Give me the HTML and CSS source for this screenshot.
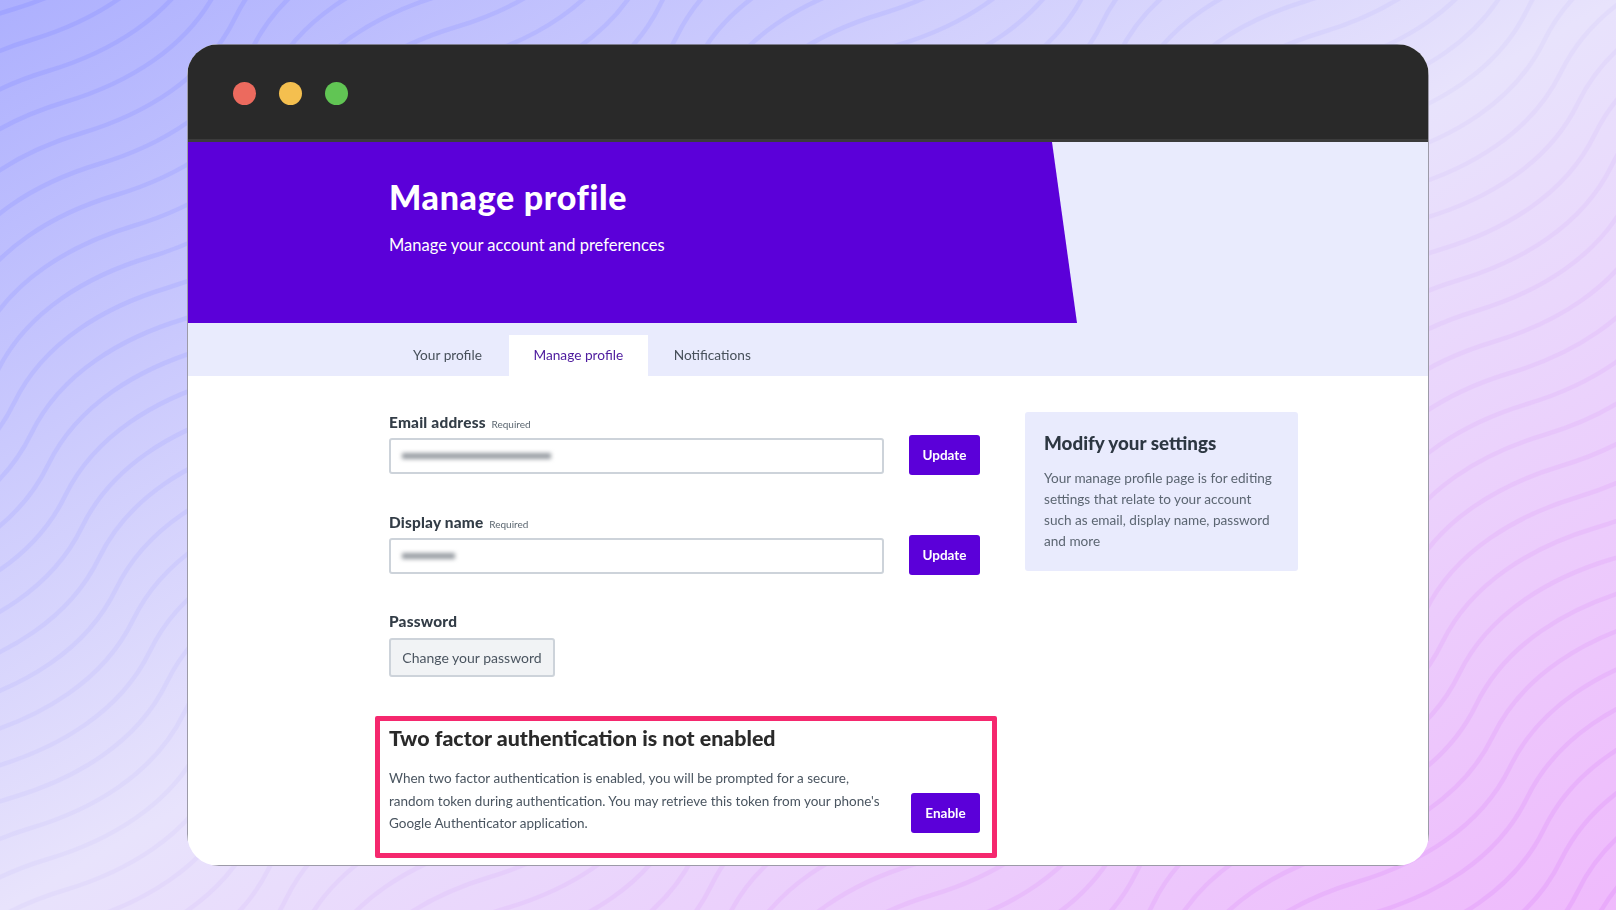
FILE: index.html
```html
<!DOCTYPE html>
<html lang="en">
<head>
    <meta charset="UTF-8">
    <title>Manage profile</title>
    <link rel="stylesheet" href="styles.css">
</head>
<body>
    <svg class="backdrop" width="1616" height="910" viewBox="0 0 1616 910" aria-hidden="true">
        <defs>
            <linearGradient id="wave-colour" gradientUnits="userSpaceOnUse" x1="419" y1="-236" x2="1197" y2="1146">
                <stop offset="0" stop-color="#a0a4ff"/>
                <stop offset="0.25" stop-color="#bebefe"/>
                <stop offset="0.5" stop-color="#e2dcfb"/>
                <stop offset="0.75" stop-color="#e8c2fb"/>
                <stop offset="1" stop-color="#e9aafb"/>
            </linearGradient>
            <path id="w" fill="none" stroke="#fff" stroke-width="4.5" d="M-921 1062c30-62 93-97 153-115s123-53 153-115s93-97 153-115s123-53 153-115s93-97 153-115s123-53 153-115s93-97 153-115s123-53 153-115s93-97 153-115s123-53 153-115s93-97 153-115s123-53 153-115s93-97 153-115s123-53 153-115s93-97 153-115s123-53 153-115s93-97 153-115s123-53 153-115"/>
            <g id="w2"><use href="#w"/><use href="#w" transform="translate(17 31)"/></g>
            <g id="w4"><use href="#w2"/><use href="#w2" transform="translate(34 62)"/></g>
            <g id="w8"><use href="#w4"/><use href="#w4" transform="translate(68 124)"/></g>
            <g id="w16"><use href="#w8"/><use href="#w8" transform="translate(136 248)"/></g>
            <mask id="wave-mask" maskUnits="userSpaceOnUse" x="0" y="0" width="1616" height="910">
                <g transform="translate(-170 -310)">
                    <use href="#w16"/>
                    <use href="#w16" transform="translate(272 496)"/>
                    <use href="#w16" transform="translate(544 992)"/>
                    <use href="#w4" transform="translate(816 1488)"/>
                </g>
            </mask>
        </defs>
        <rect width="1616" height="910" fill="url(#wave-colour)" mask="url(#wave-mask)"/>
    </svg>

    <div class="window">
        <div class="window-inner">
            <div class="titlebar">
                <span class="dot dot-red"></span>
                <span class="dot dot-yellow"></span>
                <span class="dot dot-green"></span>
            </div>
            <div class="page">
                <div class="hero-band">
                    <header class="hero">
                        <h1>Manage profile</h1>
                        <p>Manage your account and preferences</p>
                    </header>
                </div>
                <nav class="tabs">
                    <a class="tab">Your profile</a>
                    <a class="tab tab-active">Manage profile</a>
                    <a class="tab tab-last">Notifications</a>
                </nav>
                <main class="content">
                    <div class="form-col">
                        <div class="field">
                            <div class="label">Email address <small>Required</small></div>
                            <div class="field-row">
                                <div class="input"><span class="redacted redacted-email"></span></div>
                                <button class="btn">Update</button>
                            </div>
                        </div>
                        <div class="field">
                            <div class="label">Display name <small>Required</small></div>
                            <div class="field-row">
                                <div class="input"><span class="redacted redacted-name"></span></div>
                                <button class="btn">Update</button>
                            </div>
                        </div>
                        <div class="field field-password">
                            <div class="label">Password</div>
                            <button class="btn-outline">Change your password</button>
                        </div>
                        <section class="two-factor">
                            <h2>Two factor authentication is not enabled</h2>
                            <div class="two-factor-row">
                                <p>When two factor authentication is enabled, you will be prompted for a secure, random token during authentication. You may retrieve this token from your phone's Google Authenticator application.</p>
                                <button class="btn btn-enable">Enable</button>
                            </div>
                        </section>
                    </div>
                    <aside class="help-card">
                        <h3>Modify your settings</h3>
                        <p>Your manage profile page is for editing settings that relate to your account such as email, display name, password and more</p>
                    </aside>
                </main>
            </div>
        </div>
    </div>
</body>
</html>
```

FILE: styles.css
```css
* {
    box-sizing: border-box;
}

body {
    margin: 0;
    height: 910px;
    padding: 44px 187px;
    overflow: hidden;
    font-family: "Lato", "Liberation Sans", sans-serif;
    background: linear-gradient(to bottom right, #adb0fe 0%, #e8e3fc 50%, #efbafc 100%);
}

.backdrop {
    position: absolute;
    top: 0;
    left: 0;
}

.window {
    position: relative;
    height: 822px;
    background-color: #fff;
    border-radius: 32px;
    overflow: hidden;
}

.window-inner {
    height: 100%;
    display: flex;
    flex-direction: column;
    border: 1px solid #9c9aa8;
    border-top-color: #7d7c90;
}

.titlebar {
    flex: none;
    height: 97px;
    display: flex;
    align-items: center;
    gap: 23px;
    padding: 3px 0 0 45px;
    background-color: #292929;
    border-bottom: 3px solid #3b3b3b;
}

.dot {
    width: 23px;
    height: 23px;
    border-radius: 50%;
}

.dot-red { background-color: #ec6a5e; }
.dot-yellow { background-color: #f4bf4f; }
.dot-green { background-color: #61c554; }

.page {
    flex: 1;
    min-height: 0;
    filter: blur(0.5px);
}

.hero-band {
    height: 181px;
    background-color: #e9ebfd;
}

.hero {
    width: 889px;
    height: 100%;
    padding: 35px 0 0 201px;
    background-color: #5b00d9;
    color: #fff;
    clip-path: polygon(0 0, 864px 0, 100% 100%, 0 100%);
}

.hero h1 {
    margin: 0;
    font-size: 34px;
    line-height: 40px;
    font-weight: 900;
    letter-spacing: 0.65px;
}

.hero p {
    margin: 18px 0 0;
    font-size: 16.5px;
    line-height: 20px;
}

.tabs {
    height: 53px;
    display: flex;
    align-items: flex-end;
    padding-left: 201px;
    background-color: #e9ebfd;
}

.tab {
    height: 41px;
    padding: 0 24px;
    line-height: 40px;
    font-size: 13.7px;
    color: #47505a;
}

.tab-active {
    margin-left: 3px;
    padding: 0 24.5px;
    background-color: #fff;
    color: #4d1a9e;
}

.tab-last {
    margin-left: 2px;
}

.content {
    display: flex;
    gap: 45px;
    padding: 36px 0 0 201px;
}

.form-col {
    width: 591px;
    flex: none;
}

.field {
    height: 100px;
}

.field-password {
    height: 105px;
    margin-top: -1px;
}

.label {
    height: 23px;
    font-size: 15.4px;
    line-height: 20px;
    font-weight: 900;
    letter-spacing: 0.2px;
    color: #333d47;
}

.label small {
    margin-left: 2px;
    font-size: 10px;
    font-weight: 400;
    letter-spacing: 0;
    color: #5b6670;
}

.field-row {
    display: flex;
    align-items: center;
    justify-content: space-between;
}

.input {
    width: 495px;
    height: 36px;
    margin-top: 2px;
    display: flex;
    align-items: center;
    padding-left: 11px;
    background-color: #fff;
    border: 2px solid #cdd3da;
    border-radius: 3px;
}

.redacted {
    height: 6px;
    background-color: #979ca2;
    filter: blur(2px);
}

.redacted-email { width: 149px; }
.redacted-name { width: 53px; }

.btn {
    width: 71px;
    height: 40px;
    padding: 0;
    background-color: #5b00d9;
    border: none;
    border-radius: 3px;
    color: #fff;
    font-family: inherit;
    font-size: 13.5px;
    font-weight: 700;
}

.btn-outline {
    display: block;
    width: 166px;
    height: 39px;
    margin-top: 4px;
    padding: 0;
    background-color: #f1f3f5;
    border: 2px solid #cdd3da;
    border-radius: 3px;
    color: #4b5560;
    font-family: inherit;
    font-size: 14px;
}

.two-factor {
    width: 622px;
    height: 142px;
    margin-left: -14px;
    padding: 4px 0 0 9px;
    border: 5px solid #f5286e;
    border-radius: 2px;
}

.two-factor h2 {
    margin: 0;
    font-size: 21.4px;
    line-height: 26px;
    font-weight: 900;
    color: #2a2a2a;
}

.two-factor-row {
    display: flex;
    justify-content: space-between;
    align-items: flex-end;
    padding-right: 12px;
}

.two-factor p {
    width: 492px;
    margin: 16px 0 0;
    font-size: 13.5px;
    line-height: 22.7px;
    color: #4a5560;
}

.btn-enable {
    flex: none;
    width: 69px;
    margin-bottom: 2px;
}

.help-card {
    width: 273px;
    height: 159px;
    padding: 20px 18px 0 19px;
    background-color: #e9ebfd;
    border-radius: 3px;
}

.help-card h3 {
    margin: 0;
    font-size: 18.8px;
    line-height: 22px;
    font-weight: 900;
    color: #2d3742;
}

.help-card p {
    margin: 14px 0 0;
    font-size: 13.6px;
    line-height: 21px;
    color: #5c6672;
}
```
